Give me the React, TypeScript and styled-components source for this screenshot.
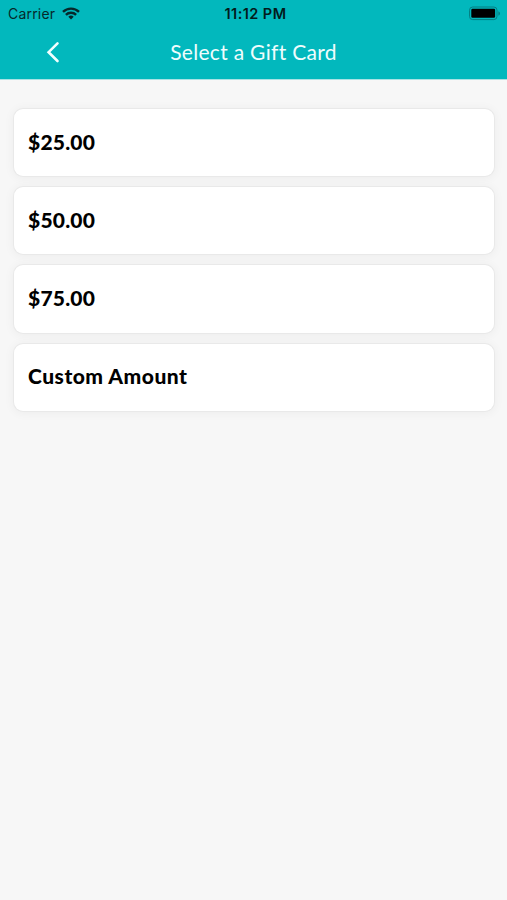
import React from 'react';
import styled, { createGlobalStyle } from 'styled-components';

const GlobalStyle = createGlobalStyle`
  * { box-sizing: border-box; }
  body { margin: 0; background: #f7f7f7; }
`;

const Screen = styled.div`
  width: 100%;
  min-height: 900px;
  background: #f7f7f7;
  font-family: Lato, sans-serif;
`;

const Header = styled.header`
  height: 79px;
  background: #02b8bd;
  box-shadow: 0 1px 0 #a9e3e5;
`;

const StatusBar = styled.div`
  height: 27px;
  padding: 0 6px 0 8px;
  display: grid;
  grid-template-columns: 1fr auto 1fr;
  align-items: center;
  font-family: Inter, sans-serif;
  font-size: 14px;
  line-height: 27px;
  color: #06292b;
`;

const Carrier = styled.div`
  display: flex;
  align-items: center;
  gap: 7px;
  letter-spacing: 0.2px;
`;

const Clock = styled.div`
  font-size: 14.5px;
  font-weight: 600;
  letter-spacing: 0.45px;
  padding-left: 2px;
  color: #031b1c;
`;

const BatterySlot = styled.div`
  display: flex;
  justify-content: flex-end;
`;

const NavBar = styled.nav`
  height: 50px;
  display: grid;
  grid-template-columns: 106px 1fr 106px;
  align-items: center;
`;

const BackButton = styled.button`
  height: 50px;
  padding: 0;
  border: 0;
  background: none;
  display: flex;
  align-items: center;
  justify-content: center;
`;

const Title = styled.h1`
  margin: 0;
  text-align: center;
  font-size: 21px;
  line-height: 50px;
  font-weight: 400;
  letter-spacing: 0.3px;
  color: #effdfd;
  white-space: nowrap;
`;

const CardList = styled.main`
  padding: 30px 13px 0 14px;
  display: flex;
  flex-direction: column;
  gap: 11px;
`;

const Card = styled.button`
  width: 100%;
  height: 67.2px;
  padding: 0 14px 2.4px;
  border: 0;
  border-radius: 9px;
  background: #fff;
  box-shadow: 0 0 0 1px #e9e9e9, 0 1px 10px 2px rgba(0, 0, 0, 0.04);
  font-family: inherit;
  font-size: 21px;
  font-weight: 900;
  text-align: left;
  color: #000;
`;

const Label = styled.span<{ $spacing: number }>`
  letter-spacing: ${(p) => p.$spacing}px;
`;

const options = [
  { label: '$25.00', spacing: 0.2 },
  { label: '$50.00', spacing: 0.2 },
  { label: '$75.00', spacing: 0.2 },
  { label: 'Custom Amount', spacing: 0.5 },
];

const WifiIcon = () => (
  <svg width="18" height="13" viewBox="0 0 18 13" fill="none" stroke="#06292b" strokeWidth="2.4">
    <path d="M1 4.9a11.4 11.4 0 0 1 16 0" />
    <path d="M3.9 7.8a7.2 7.2 0 0 1 10.2 0" />
    <path d="M9 12.4 6.3 9.8a3.8 3.8 0 0 1 5.4 0z" fill="#06292b" stroke="none" />
  </svg>
);

const BatteryIcon = () => (
  <svg width="32" height="15" viewBox="0 0 32 15">
    <rect x="0.5" y="1" width="27.5" height="12.6" rx="3.2" fill="none" stroke="#047f83" />
    <rect x="2.3" y="2.8" width="23.8" height="9" rx="1.2" fill="#000" />
    <path d="M29.4 5.2c2.1.8 2.1 3.7 0 4.5z" fill="#047f83" />
  </svg>
);

const BackIcon = () => (
  <svg width="14" height="22" viewBox="0 0 14 22" fill="none" stroke="#f2ffff" strokeWidth="2.6" strokeLinecap="round">
    <path d="M11.5 2.4 2.6 11.2 11.5 20" />
  </svg>
);

export default function App() {
  return (
    <Screen>
      <GlobalStyle />
      <Header>
        <StatusBar>
          <Carrier>
            <span>Carrier</span>
            <WifiIcon />
          </Carrier>
          <Clock>11:12 PM</Clock>
          <BatterySlot>
            <BatteryIcon />
          </BatterySlot>
        </StatusBar>
        <NavBar>
          <BackButton aria-label="Back">
            <BackIcon />
          </BackButton>
          <Title>Select a Gift Card</Title>
        </NavBar>
      </Header>
      <CardList>
        {options.map((o) => (
          <Card key={o.label}>
            <Label $spacing={o.spacing}>{o.label}</Label>
          </Card>
        ))}
      </CardList>
    </Screen>
  );
}
